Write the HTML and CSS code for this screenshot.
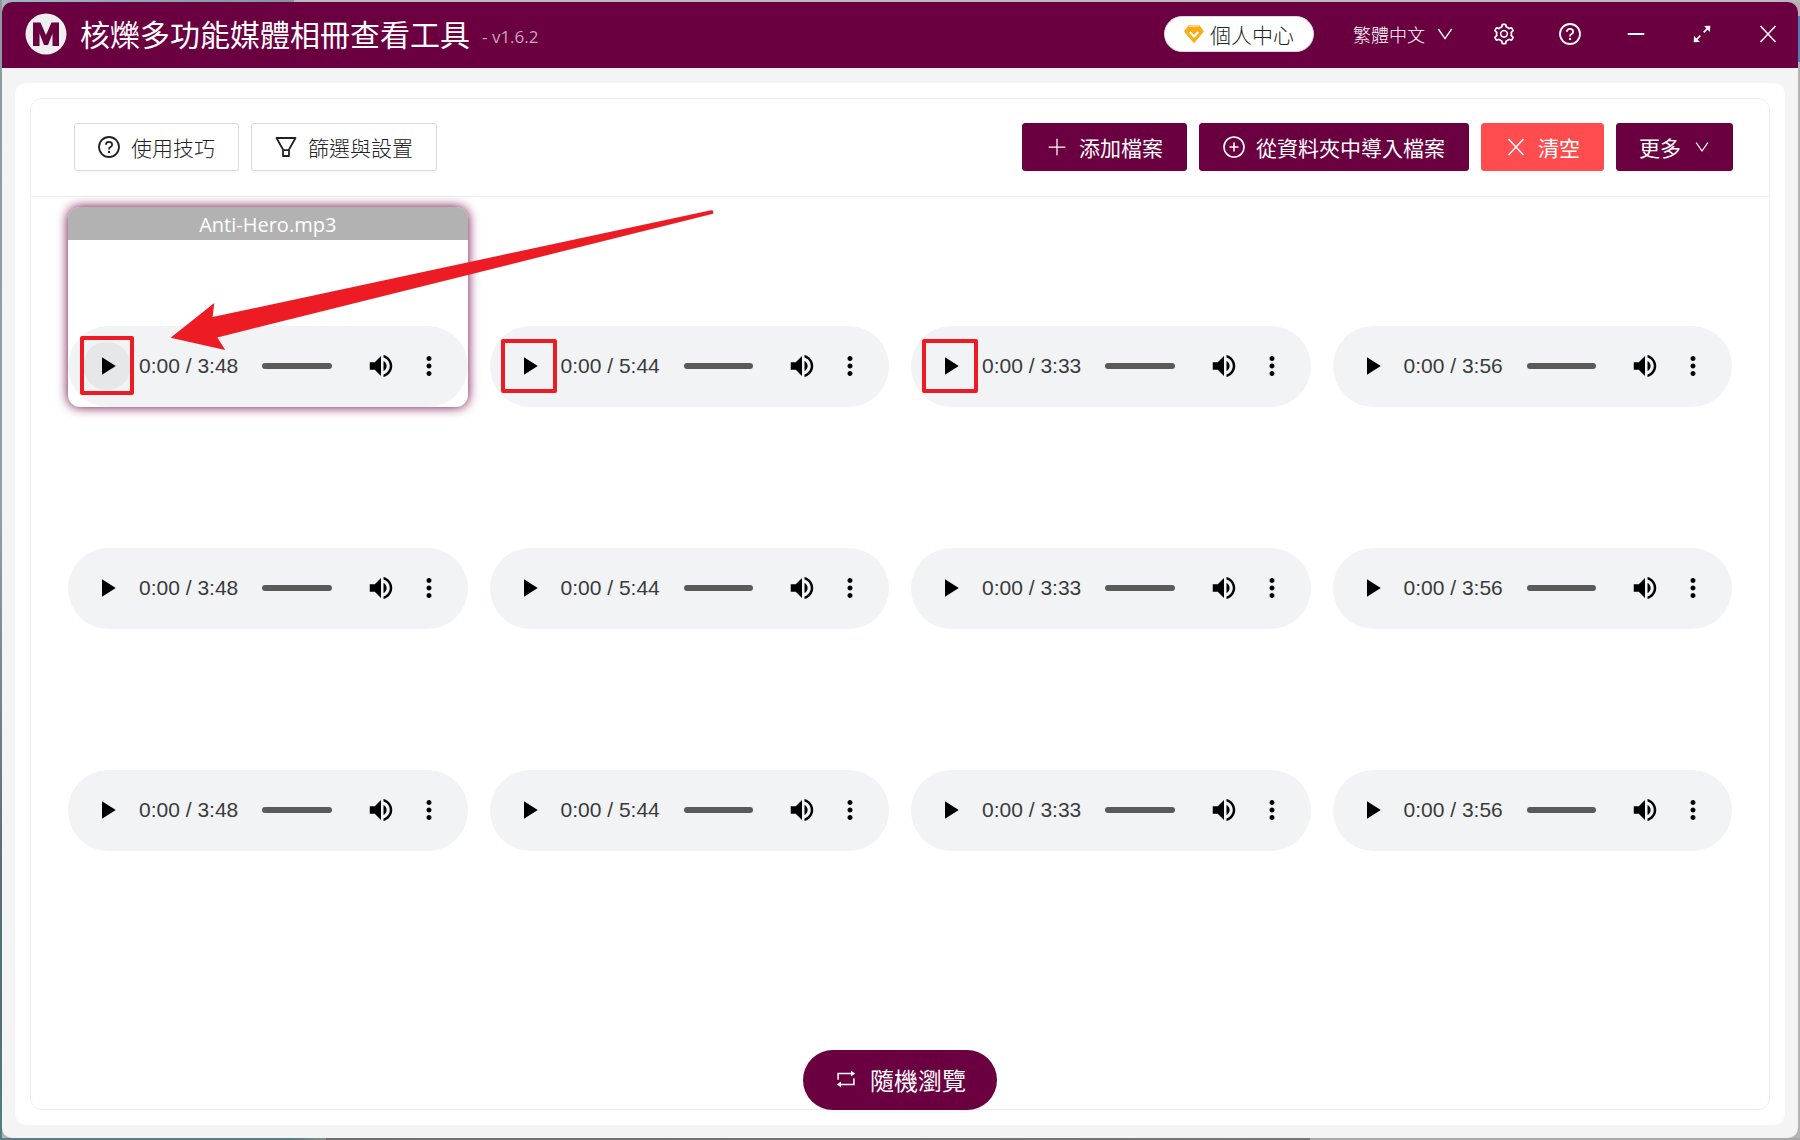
FILE: index.html
```html
<!DOCTYPE html>
<html lang="zh-Hant">
<head>
<meta charset="utf-8">
<meta name="viewport" content="width=device-width, initial-scale=1">
<title>核爍多功能媒體相冊查看工具</title>
<link rel="stylesheet" href="styles.css">
</head>
<body>
<svg class="sprite" aria-hidden="true">
  <symbol id="i-help" viewBox="0 0 24 24"><g fill="none" stroke="currentColor" stroke-width="1.8"><circle cx="12" cy="12" r="10"/><path d="M8.9 9.8c0-1.8 1.4-2.9 3.1-2.9s3.1 1.100 3.100 2.800c0 1.300-.9 2-1.900 2.500-.8.4-1.200.9-1.200 1.800v.4"/></g><circle cx="12" cy="16.900" r="1.200" fill="currentColor"/></symbol>
  <symbol id="i-filter" viewBox="0 0 24 24"><path d="M2.500 3h19L15 14.500V21H9v-6.500zM9 15.200h6" fill="none" stroke="currentColor" stroke-width="1.800" stroke-linejoin="round"/></symbol>
  <symbol id="i-plus" viewBox="0 0 24 24"><path d="M12 2v20M2 12h20" fill="none" stroke="currentColor" stroke-width="1.500"/></symbol>
  <symbol id="i-plus-circle" viewBox="0 0 24 24"><path d="M12 7.500v9M7.500 12h9M22 12a10 10 0 1 1-20 0 10 10 0 0 1 20 0z" fill="none" stroke="currentColor" stroke-width="1.600"/></symbol>
  <symbol id="i-close" viewBox="0 0 24 24"><path d="M3 2.500l18 19M21 2.500l-18 19" fill="none" stroke="currentColor" stroke-width="1.800"/></symbol>
  <symbol id="i-down" viewBox="0 0 24 24"><path d="M2 4.500l10 14.500L22 4.500" fill="none" stroke="currentColor" stroke-width="2"/></symbol>
  <symbol id="i-gear" viewBox="0 0 1024 1024"><path fill="currentColor" d="M924.800 625.700l-65.500-56c3.100-19 4.700-38.400 4.700-57.800s-1.600-38.800-4.700-57.800l65.500-56a32.030 32.030 0 0 0 9.300-35.200l-.9-2.600a443.740 443.740 0 0 0-79.700-137.900l-1.800-2.100a32.120 32.120 0 0 0-35.100-9.500l-81.300 28.900c-30-24.600-63.500-44-99.700-57.600l-15.700-85a32.050 32.050 0 0 0-25.800-25.700l-2.700-.5c-52.100-9.400-106.900-9.400-159 0l-2.700.5a32.050 32.050 0 0 0-25.800 25.700l-15.800 85.400a351.860 351.860 0 0 0-99 57.400l-81.900-29.100a32 32 0 0 0-35.100 9.500l-1.800 2.100a446.020 446.020 0 0 0-79.700 137.900l-.9 2.600c-4.500 12.500-.8 26.500 9.300 35.200l66.300 56.600c-3.100 18.800-4.600 38-4.600 57.100 0 19.200 1.500 38.400 4.600 57.100L99 625.500a32.030 32.030 0 0 0-9.300 35.200l.9 2.600c18.100 50.400 44.900 96.900 79.700 137.900l1.800 2.100a32.120 32.120 0 0 0 35.100 9.500l81.900-29.100c29.800 24.500 63.100 43.900 99 57.400l15.800 85.400a32.050 32.050 0 0 0 25.800 25.700l2.700.5a449.400 449.400 0 0 0 159 0l2.700-.5a32.050 32.050 0 0 0 25.800-25.700l15.700-85a350 350 0 0 0 99.700-57.600l81.300 28.900a32 32 0 0 0 35.100-9.500l1.800-2.100c34.800-41.100 61.600-87.500 79.700-137.900l.9-2.600c4.500-12.300.8-26.300-9.300-35zM788.300 465.900c2.500 15.100 3.800 30.600 3.800 46.100s-1.300 31-3.800 46.100l-6.600 40.100 74.700 63.900a370.030 370.030 0 0 1-42.600 73.600L721 702.800l-31.400 25.800c-23.900 19.600-50.500 35-79.300 45.800l-38.100 14.300-17.900 97a377.500 377.500 0 0 1-85 0l-17.900-97.200-37.800-14.500c-28.500-10.800-55-26.200-78.700-45.700l-31.400-25.900-93.400 33.200c-17-22.900-31.200-47.600-42.600-73.600l75.500-64.500-6.500-40c-2.400-14.900-3.700-30.300-3.700-45.500 0-15.300 1.200-30.600 3.700-45.500l6.500-40-75.500-64.500c11.300-26.100 25.600-50.700 42.600-73.600l93.400 33.200 31.400-25.900c23.700-19.500 50.200-34.900 78.700-45.700l37.900-14.300 17.900-97.200c28.100-3.200 56.800-3.200 85 0l17.900 97 38.100 14.300c28.700 10.800 55.400 26.200 79.300 45.800l31.400 25.800 92.800-32.900c17 22.900 31.200 47.600 42.600 73.600L781.800 426l6.500 39.900zM512 326c-97.200 0-176 78.800-176 176s78.800 176 176 176 176-78.800 176-176-78.800-176-176-176zm79.200 255.200A111.600 111.600 0 0 1 512 614c-29.900 0-58-11.700-79.200-32.800A111.600 111.600 0 0 1 400 502c0-29.900 11.700-58 32.800-79.200C454 401.600 482.100 390 512 390c29.900 0 58 11.600 79.200 32.800A111.600 111.600 0 0 1 624 502c0 29.900-11.700 58-32.800 79.200z"/></symbol>
  <symbol id="i-minus" viewBox="0 0 24 24"><path d="M2 12h20" stroke="currentColor" stroke-width="2.200"/></symbol>
  <symbol id="i-expand" viewBox="0 0 24 24"><path d="M14 10l5-5M10 14l-5 5" stroke="currentColor" stroke-width="2"/><path d="M14.500 2.500L22 2l-.5 7.500zM9.500 21.500L2 22l.5-7.500z" fill="currentColor"/></symbol>
  <symbol id="i-gem" viewBox="0 0 24 24"><path d="M5.500 2h13L23.500 9 12 22.500.5 9z" fill="#faad14" stroke="#faad14" stroke-linejoin="round"/><path d="M6 2.500h12" stroke="#ffd58a" stroke-width="2"/><path d="M7 9.500l5 5.500 5-5.500" fill="none" stroke="#fff" stroke-width="2.600"/></symbol>
  <symbol id="i-loop" viewBox="0 0 24 24"><path d="M2.500 13V5.500H19M21.500 11v7.500H5" fill="none" stroke="currentColor" stroke-width="1.800"/><path d="M18 2l5 3.500L18 9zM6 15l-5 3.500L6 22z" fill="currentColor"/></symbol>
  <symbol id="i-play" viewBox="0 0 24 24"><path d="M8 5v14l11-7z"/></symbol>
  <symbol id="i-volume" viewBox="0 0 24 24"><path d="M3 9v6h4l5 5V4L7 9H3zm13.500 3c0-1.770-1.020-3.290-2.500-4.030v8.050c1.480-.73 2.500-2.250 2.500-4.020zM14 3.230v2.060c2.890.86 5 3.540 5 6.710s-2.110 5.850-5 6.710v2.060c4.010-.91 7-4.490 7-8.770s-2.990-7.860-7-8.770z"/></symbol>
  <symbol id="i-dots" viewBox="0 0 24 24"><path d="M12 8c1.100 0 2-.9 2-2s-.9-2-2-2-2 .9-2 2 .9 2 2 2zm0 2c-1.100 0-2 .9-2 2s.9 2 2 2 2-.9 2-2-.9-2-2-2zm0 6c-1.100 0-2 .9-2 2s.9 2 2 2 2-.9 2-2-.9-2-2-2z"/></symbol>
</svg>

<div class="window">
  <header class="titlebar">
    <svg class="logo" viewBox="0 0 42 42" aria-hidden="true"><circle cx="21" cy="21" r="20.500" fill="#efefef"/><path d="M8 33V9.500h7.500L21 22l5.500-12.500H34V33h-6.500V20.500L23 32h-4l-4.500-11.500V33z" fill="#6b0041"/></svg>
    <h1 class="app-name">核爍多功能媒體相冊查看工具</h1>
    <span class="version">- v1.6.2</span>
    <button class="account" type="button"><svg class="ic ic-20"><use href="#i-gem"/></svg>個人中心</button>
    <button class="language" type="button">繁體中文<svg class="ic ic-16"><use href="#i-down"/></svg></button>
    <nav class="window-tools" aria-label="視窗">
      <button type="button" aria-label="設置"><svg class="ic ic-24"><use href="#i-gear"/></svg></button>
      <button type="button" aria-label="幫助"><svg class="ic ic-24"><use href="#i-help"/></svg></button>
      <button type="button" aria-label="最小化"><svg class="ic ic-20"><use href="#i-minus"/></svg></button>
      <button type="button" aria-label="最大化"><svg class="ic ic-20"><use href="#i-expand"/></svg></button>
      <button type="button" aria-label="關閉"><svg class="ic ic-20"><use href="#i-close"/></svg></button>
    </nav>
  </header>

  <main class="page">
    <section class="panel">
      <div class="toolbar">
        <button class="btn" type="button"><svg class="ic ic-24"><use href="#i-help"/></svg>使用技巧</button>
        <button class="btn" type="button"><svg class="ic ic-24"><use href="#i-filter"/></svg>篩選與設置</button>
        <span class="spacer"></span>
        <button class="btn primary" type="button"><svg class="ic ic-24 thin"><use href="#i-plus"/></svg>添加檔案</button>
        <button class="btn primary" type="button"><svg class="ic ic-24"><use href="#i-plus-circle"/></svg>從資料夾中導入檔案</button>
        <button class="btn danger" type="button"><svg class="ic ic-24 thin"><use href="#i-close"/></svg>清空</button>
        <button class="btn primary more" type="button">更多<svg class="ic ic-14"><use href="#i-down"/></svg></button>
      </div>
      <div class="grid" id="grid"></div>
      <div class="actions">
        <button class="shuffle" type="button"><svg class="ic ic-20"><use href="#i-loop"/></svg>隨機瀏覽</button>
      </div>
    </section>
  </main>
</div>

<svg class="pointer" viewBox="0 0 544 144" aria-hidden="true"><path d="M.6 129.700L44.300 95 42.600 109 541 2.300a1.900 1.900 0 0 1 1 3.700L47.300 129.400l8 12.600z" fill="#ed1c24"/></svg>
<script src="script.js"></script>
</body>
</html>
```
FILE: styles.css
```css
*, *::before, *::after { box-sizing: border-box; }

body {
  margin: 0;
  min-height: 100vh;
  padding: 2px;
  display: flex;
  background:
    linear-gradient(#8c9ba1, #8fa0a6 45%, #5a6f70 75%, #507073 90%, #4f8086) left / 2px 100% no-repeat,
    linear-gradient(90deg, #9db9c6, #84949b 294px, #b9b9b9 294px) top / 100% 2px no-repeat,
    linear-gradient(90deg, #5b8084 294px, #8c8c8c 326px, #6e6e6e 326px, #777 1310px, #a8a8a8 1310px) bottom / 100% 2px no-repeat,
    linear-gradient(#b4b4b4 16px, #5b78b8 16px, #5b78b8 62px, #b4b4b4 62px) right / 2px 100% no-repeat,
    #b4b4b4;
  color: #222;
  font-family: "Open Sans", "Noto Sans CJK TC", sans-serif;
  font-size: 21px;
}

button {
  margin: 0;
  border: 0;
  padding: 0;
  background: none;
  color: inherit;
  font: inherit;
  display: flex;
  align-items: center;
  justify-content: center;
  white-space: nowrap;
}

.sprite { position: absolute; width: 0; height: 0; }
.ic { flex: none; display: block; }
.ic-14 { width: 14px; height: 14px; }
.ic-16 { width: 16px; height: 16px; }
.ic-20 { width: 20px; height: 20px; }
.ic-24 { width: 24px; height: 24px; }
.thin { padding: 2px; }

.window {
  flex: 1;
  min-width: 0;
  display: flex;
  flex-direction: column;
  border-radius: 10px;
  overflow: hidden;
  background: #f4f4f4;
}

.titlebar {
  height: 66px;
  padding: 0 19px 2px 23px;
  display: flex;
  align-items: center;
  background: #6b0041;
  color: #fff;
}

.logo { width: 42px; height: 42px; }
.app-name { margin: 0 0 0 13px; padding-top: 2px; font-size: 30px; font-weight: 400; line-height: 40px; }
.version { margin-left: 12px; padding-top: 4px; font-size: 17px; color: #c9a4ba; }

.account {
  height: 36px;
  width: 150px;
  margin-left: auto;
  gap: 6px;
  border: 1px solid #d9d9d9;
  border-radius: 18px;
  background: #fff;
  color: #222;
  font-weight: 300;
}

.language { margin-left: 39px; gap: 12px; font-size: 18px; font-weight: 300; }
.window-tools { margin-left: 18px; display: flex; }
.window-tools button { width: 66px; height: 40px; }
.window-tools button:last-child { margin-right: -22px; }

.page {
  flex: 1;
  margin: 15px 13px 13px;
  padding: 15px;
  display: flex;
  border-radius: 12px;
  background: #fff;
}

.panel {
  flex: 1;
  min-width: 0;
  display: flex;
  flex-direction: column;
  border: 1px solid #eee;
  border-radius: 12px;
}

.toolbar {
  height: 98px;
  padding: 0 36px 2px 43px;
  display: flex;
  align-items: center;
  gap: 12px;
  border-bottom: 1px solid #eee;
}

.spacer { flex: 1; }

.btn {
  height: 48px;
  padding: 0 23px 0 22px;
  gap: 10px;
  border: 1px solid #d9d9d9;
  border-radius: 3px;
  box-shadow: 0 3px 0 rgba(0, 0, 0, .02);
  background: #fff;
  font-weight: 300;
}

.btn.primary { border-color: #6b0041; background: #6b0041; color: #fff; font-weight: 400; }
.btn.danger { border-color: #ff4d4f; background: #ff4d4f; color: #fff; font-weight: 400; }
.btn.more { gap: 14px; padding-right: 23px; }

.grid {
  padding: 10px 37px;
  display: grid;
  grid-template-columns: repeat(4, minmax(0, 1fr));
  grid-auto-rows: 200px;
  gap: 22px;
}

.media {
  display: flex;
  flex-direction: column;
  border-radius: 12px;
  overflow: hidden;
}

.media.active { background: #fff; box-shadow: 0 0 12px #6b0041; }

.media-name {
  height: 33px;
  background: #b2b2b2;
  color: #fff;
  font-size: 20px;
  text-align: center;
  line-height: 35px;
}

.player {
  position: relative;
  height: 81px;
  margin-top: auto;
  padding: 0 15px 1px;
  display: flex;
  align-items: center;
  border-radius: 41px;
  background: #f1f3f4;
}

.player button { width: 48px; height: 48px; border-radius: 50%; }
.active .play { background: #e5e7e8; }
.time { margin-left: 8px; color: #3a3b3c; font-family: "Liberation Sans", sans-serif; white-space: nowrap; }

.seek {
  flex: 1;
  min-width: 0;
  height: 6px;
  margin: 0 25px 0 24px;
  appearance: none;
  border-radius: 3px;
  background: #5a5a5a;
}

.seek::-webkit-slider-thumb { appearance: none; width: 0; height: 0; }

/* tutorial marks laid over the players */
.mark::after {
  content: "";
  position: absolute;
  left: 11px;
  top: 13px;
  width: 56px;
  height: 54px;
  border: 4px solid #ed1c24;
  border-radius: 2px;
}

.active .mark::after { left: 12px; top: 10px; width: 54px; height: 59px; }

.pointer {
  position: absolute;
  left: 170px;
  top: 208px;
  width: 544px;
  height: 144px;
}

.actions { margin: auto 0 -1px; display: flex; justify-content: center; }

.shuffle {
  height: 60px;
  padding: 0 31px 2px 33px;
  gap: 14px;
  border-radius: 30px;
  box-shadow: 0 3px 0 rgba(0, 0, 0, .02);
  background: #6b0041;
  color: #fff;
  font-size: 24px;
}
```
FILE: script.js
```js
const durations = ['3:48', '5:44', '3:33', '3:56'];
const icon = (id) => `<svg class="ic" width="30" height="30"><use href="#i-${id}"/></svg>`;

const cards = [];
for (let row = 0; row < 3; row++) {
  durations.forEach((length, col) => {
    const active = row === 0 && col === 0;
    const marked = row === 0 && col < 3;
    cards.push(`
      <article class="media${active ? ' active' : ''}">
        ${active ? '<div class="media-name">Anti-Hero.mp3</div>' : ''}
        <div class="player${marked ? ' mark' : ''}">
          <button class="play" type="button" aria-label="播放">${icon('play')}</button>
          <span class="time">0:00 / ${length}</span>
          <input class="seek" type="range" min="0" value="0" aria-label="進度">
          <button type="button" aria-label="音量">${icon('volume')}</button>
          <button type="button" aria-label="更多選項">${icon('dots')}</button>
        </div>
      </article>`);
  });
}
document.getElementById('grid').innerHTML = cards.join('');
```
